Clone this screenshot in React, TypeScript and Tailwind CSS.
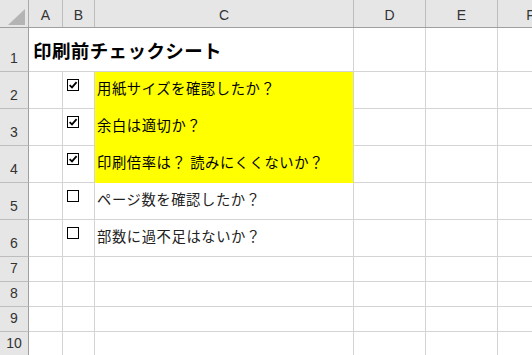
const cols = ["A", "B", "C", "D", "E", "F"];
const colW = ["w-[34px]", "w-[32px]", "w-[259px]", "w-[72px]", "w-[72px]", "w-[66px]"];

type Row = { n: number; h: string; check?: boolean; text?: string; yellow?: boolean; title?: string };

const rows: Row[] = [
  { n: 1, h: "h-[44px]", title: "印刷前チェックシート" },
  { n: 2, h: "h-[37px]", check: true, text: "用紙サイズを確認したか？", yellow: true },
  { n: 3, h: "h-[37px]", check: true, text: "余白は適切か？", yellow: true },
  { n: 4, h: "h-[37px]", check: true, text: "印刷倍率は？ 読みにくくないか？", yellow: true },
  { n: 5, h: "h-[37px]", check: false, text: "ページ数を確認したか？" },
  { n: 6, h: "h-[37px]", check: false, text: "部数に過不足はないか？" },
  { n: 7, h: "h-[25px]" },
  { n: 8, h: "h-[25px]" },
  { n: 9, h: "h-[25px]" },
  { n: 10, h: "h-[25px]" },
];

function Box({ checked }: { checked: boolean }) {
  return (
    <div className="w-[12px] h-[12px] border-[1.3px] border-black bg-white flex items-center justify-center">
      {checked && (
        <svg width="10" height="10" viewBox="0 0 10 10">
          <path d="M1.6 5.2 L4 7.4 L8.6 2.2" fill="none" stroke="#000" strokeWidth="1.8" />
        </svg>
      )}
    </div>
  );
}

export default function App() {
  return (
    <div
      className="w-[532px] h-[355px] overflow-hidden bg-white text-black"
      style={{ fontFamily: '"Noto Sans CJK JP", "Noto Sans", sans-serif' }}
    >
      {/* Column headers */}
      <div className="flex h-[28px] bg-[#e6e6e6] border-b border-[#9f9f9f]">
        <div className="w-[29px] shrink-0 relative border-r border-[#ababab]">
          <svg className="absolute left-[8px] top-[9px]" width="17" height="16" viewBox="0 0 17 16">
            <polygon points="17,0 17,16 0,16" fill="#b4b4b4" />
          </svg>
        </div>
        {cols.map((c, i) => (
          <div
            key={c}
            className={`${colW[i]} shrink-0 flex items-center justify-center pt-[4px] border-r border-[#bdbdbd] text-[14px] text-[#333]`}
            style={{ fontFamily: '"Liberation Sans", Arial, sans-serif' }}
          >
            {c}
          </div>
        ))}
      </div>

      {rows.map((r) => (
        <div key={r.n} className={`flex ${r.h} shrink-0`}>
          <div
            className="w-[29px] shrink-0 bg-[#e6e6e6] border-r border-[#9f9f9f] border-b border-b-[#bdbdbd] flex items-end justify-center pb-[6px] text-[14px] text-[#333] leading-none"
            style={{ fontFamily: '"Liberation Sans", Arial, sans-serif' }}
          >
            {r.n}
          </div>
          {r.title ? (
            <div className="flex-1 relative border-b border-[#d4d4d4]">
              <div className="absolute left-[4px] top-[9px] text-[18.5px] font-bold whitespace-nowrap tracking-[0.4px]">
                {r.title}
              </div>
              <div className="flex h-full">
                <div className="w-[34px] shrink-0" />
                <div className="w-[32px] shrink-0" />
                <div className="w-[259px] shrink-0 border-r border-[#d4d4d4]" />
                <div className="w-[72px] shrink-0 border-r border-[#d4d4d4]" />
                <div className="w-[72px] shrink-0 border-r border-[#d4d4d4]" />
                <div className="flex-1" />
              </div>
            </div>
          ) : (
            <>
              <div className="w-[34px] shrink-0 border-r border-b border-[#d4d4d4]" />
              <div className="w-[32px] shrink-0 border-r border-b border-[#d4d4d4] pl-[4px] pt-[7px]">
                {r.check !== undefined && <Box checked={r.check} />}
              </div>
              <div
                className={`w-[259px] shrink-0 flex items-center pl-[2px] pb-[5px] text-[14.3px] tracking-[0.6px] whitespace-nowrap border-r border-[#d4d4d4] border-b ${
                  r.yellow ? "bg-[#ffff00] border-b-[#ffff00]" : "border-b-[#d4d4d4] text-[#222]"
                }`}
              >
                {r.text}
              </div>
              <div className="w-[72px] shrink-0 border-r border-b border-[#d4d4d4]" />
              <div className="w-[72px] shrink-0 border-r border-b border-[#d4d4d4]" />
              <div className="flex-1 border-b border-[#d4d4d4]" />
            </>
          )}
        </div>
      ))}
    </div>
  );
}
